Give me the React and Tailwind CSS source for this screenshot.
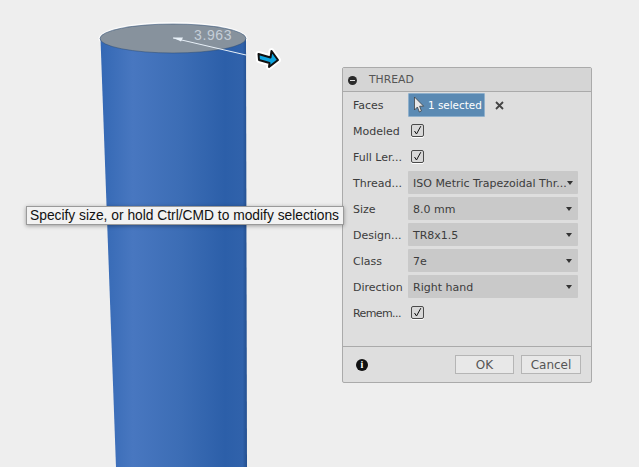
const rows = [
  { label: 'Thread...', value: 'ISO Metric Trapezoidal Thr...' },
  { label: 'Size', value: '8.0 mm' },
  { label: 'Design...', value: 'TR8x1.5' },
  { label: 'Class', value: '7e' },
  { label: 'Direction', value: 'Right hand' },
];

function Label({ children, tight }) {
  return (
    <span className={tight ? 'w-[55px] shrink-0 whitespace-nowrap pt-[4px] tracking-[-0.6px] text-[#3c3c3c]' : 'w-[55px] shrink-0 whitespace-nowrap pt-[4px] text-[#3c3c3c]'}>
      {children}
    </span>
  );
}

function Check() {
  return (
    <span className="ml-[3px] flex h-[13px] w-[13px] items-center justify-center rounded-[2px] border border-[#4a4a4a] bg-[#d8d8d8] shadow-[0_1px_0_#fff]">
      <svg width="11" height="11" viewBox="0 0 11 11" fill="none">
        <path d="M2.5 6 L4.5 9 L8.8 1.2" stroke="#111" strokeWidth="1" />
      </svg>
    </span>
  );
}

function CheckRow({ label, tight }) {
  return (
    <div className="flex h-[23px] items-center">
      <Label tight={tight}>{label}</Label>
      <Check />
    </div>
  );
}

function SelectRow({ label, value }) {
  return (
    <div className="flex h-[23px] items-center">
      <Label>{label}</Label>
      <div className="flex h-[23px] w-[170px] items-center justify-between rounded-[1px] bg-[#c9c9c9] pl-[5px] pr-[6px] text-[#3c3c3c]">
        <span className="whitespace-nowrap pt-[4px]">{value}</span>
        <svg className="shrink-0" width="6" height="4" viewBox="0 0 6 4">
          <path d="M0 0 H6 L3 4 Z" fill="#333" />
        </svg>
      </div>
    </div>
  );
}

function ThreadDialog() {
  return (
    <div className="absolute left-[342px] top-[67px] flex h-[316px] w-[250px] flex-col rounded-[2px] border border-[#aaaaaa] bg-[#dedede] font-['DejaVu_Sans',sans-serif] text-[11px]">
      <div className="flex h-[24px] items-center border-b border-[#aaaaaa] bg-[#d5d5d5] pl-[5px] pt-[2px]">
        <span className="flex h-[9px] w-[9px] items-center justify-center rounded-full bg-[#2a2a2a]">
          <span className="h-[1.5px] w-[5px] bg-[#ddd]" />
        </span>
        <span className="ml-[12px] text-[10.8px] text-[#555]">THREAD</span>
      </div>
      <div className="flex flex-1 flex-col gap-[3px] pl-[10px] pt-px">
        <div className="flex h-[23px] items-center">
          <Label>Faces</Label>
          <div className="flex h-[24px] w-[77px] items-center rounded-[1px] border border-[#8fb0cc] bg-[#5b8ab3] pl-[4px] text-[10.4px] text-white">
            <svg className="shrink-0" width="12" height="17" viewBox="0 0 12 17">
              <path d="M1.5 1 V14 L4.4 11 L6.4 16 L8.4 15 L6.6 10.2 H10.6 Z" fill="#e8e8e8" stroke="#333" strokeWidth="0.7" />
            </svg>
            <span className="ml-[3px] whitespace-nowrap pt-[2px]">1 selected</span>
          </div>
          <svg className="ml-[10px] mt-[2px]" width="9" height="9" viewBox="0 0 9 9">
            <path d="M1 1 L8 8 M8 1 L1 8" stroke="#444" strokeWidth="1.8" />
          </svg>
        </div>
        <CheckRow label="Modeled" />
        <CheckRow label="Full Ler..." />
        {rows.map((r) => (
          <SelectRow key={r.label} label={r.label} value={r.value} />
        ))}
        <CheckRow label="Remem..." tight />
      </div>
      <div className="flex h-[36px] items-center justify-between border-t border-[#aaaaaa] pl-[13px] pr-[10px]">
        <span className="flex h-[12px] w-[12px] items-center justify-center rounded-full bg-[#111] font-['Liberation_Serif',serif] text-[10px] font-bold text-white">i</span>
        <div className="flex gap-[7px] text-[12px] text-[#555]">
          <button className="h-[19px] w-[59px] border border-[#b5b5b5] bg-[#e8e8e8] leading-none">OK</button>
          <button className="h-[19px] w-[60px] border border-[#b5b5b5] bg-[#e8e8e8] leading-none">Cancel</button>
        </div>
      </div>
    </div>
  );
}

const arrowPath = 'M258.500 54 L270.500 57.500 L271.500 51 L278 60 L269 67 L269.500 63 L259 60 Z';

export default function App() {
  return (
    <div className="relative h-[467px] w-[639px] overflow-hidden bg-[#eeeeee]">
      <svg className="absolute left-0 top-0" width="639" height="467" viewBox="0 0 639 467">
        <defs>
          <linearGradient id="body" x1="0" x2="1" y1="0" y2="0">
            <stop offset="0" stopColor="#3468b4" />
            <stop offset="0.22" stopColor="#4877c0" />
            <stop offset="0.55" stopColor="#3c6db5" />
            <stop offset="0.85" stopColor="#2c5fa9" />
            <stop offset="0.97" stopColor="#3062ab" />
            <stop offset="1" stopColor="#244f8e" />
          </linearGradient>
        </defs>
        <ellipse cx="173" cy="38.5" rx="74.500" ry="16.500" fill="#fbfbfb" />
        <path d="M100.500 39 L116 467 H247 L246 39 Z" fill="url(#body)" />
        <ellipse cx="173" cy="38.5" rx="73" ry="14.5" fill="#87929d" stroke="#2b4a73" strokeWidth="0.5" />
        <path d="M173 38 L246 55" stroke="#e8f0f8" strokeWidth="1" />
        <path d="M173 37.500 L183 37.500 L181 41.500 Z" fill="#e8f0f8" />
        <g strokeLinejoin="round">
          <path d={arrowPath} fill="#fff" stroke="#fff" strokeWidth="6" />
          <path d={arrowPath} fill="#0ea5e0" stroke="#111" strokeWidth="2" />
        </g>
      </svg>
      <span className="absolute left-[194px] top-[25px] font-['Liberation_Sans',sans-serif] text-[14px] tracking-[0.6px] text-[#c5ced8]">3.963</span>
      <ThreadDialog />
      <div className="absolute left-[26px] top-[206px] whitespace-nowrap border border-[#9a9a9a] bg-[#f2f2f2] pl-[3px] pr-[4px] font-['Liberation_Sans',sans-serif] text-[13.8px] leading-[17px] text-[#111] shadow-[0_1px_4px_rgba(0,0,0,0.35)]">
        Specify size, or hold Ctrl/CMD to modify selections
      </div>
    </div>
  );
}
